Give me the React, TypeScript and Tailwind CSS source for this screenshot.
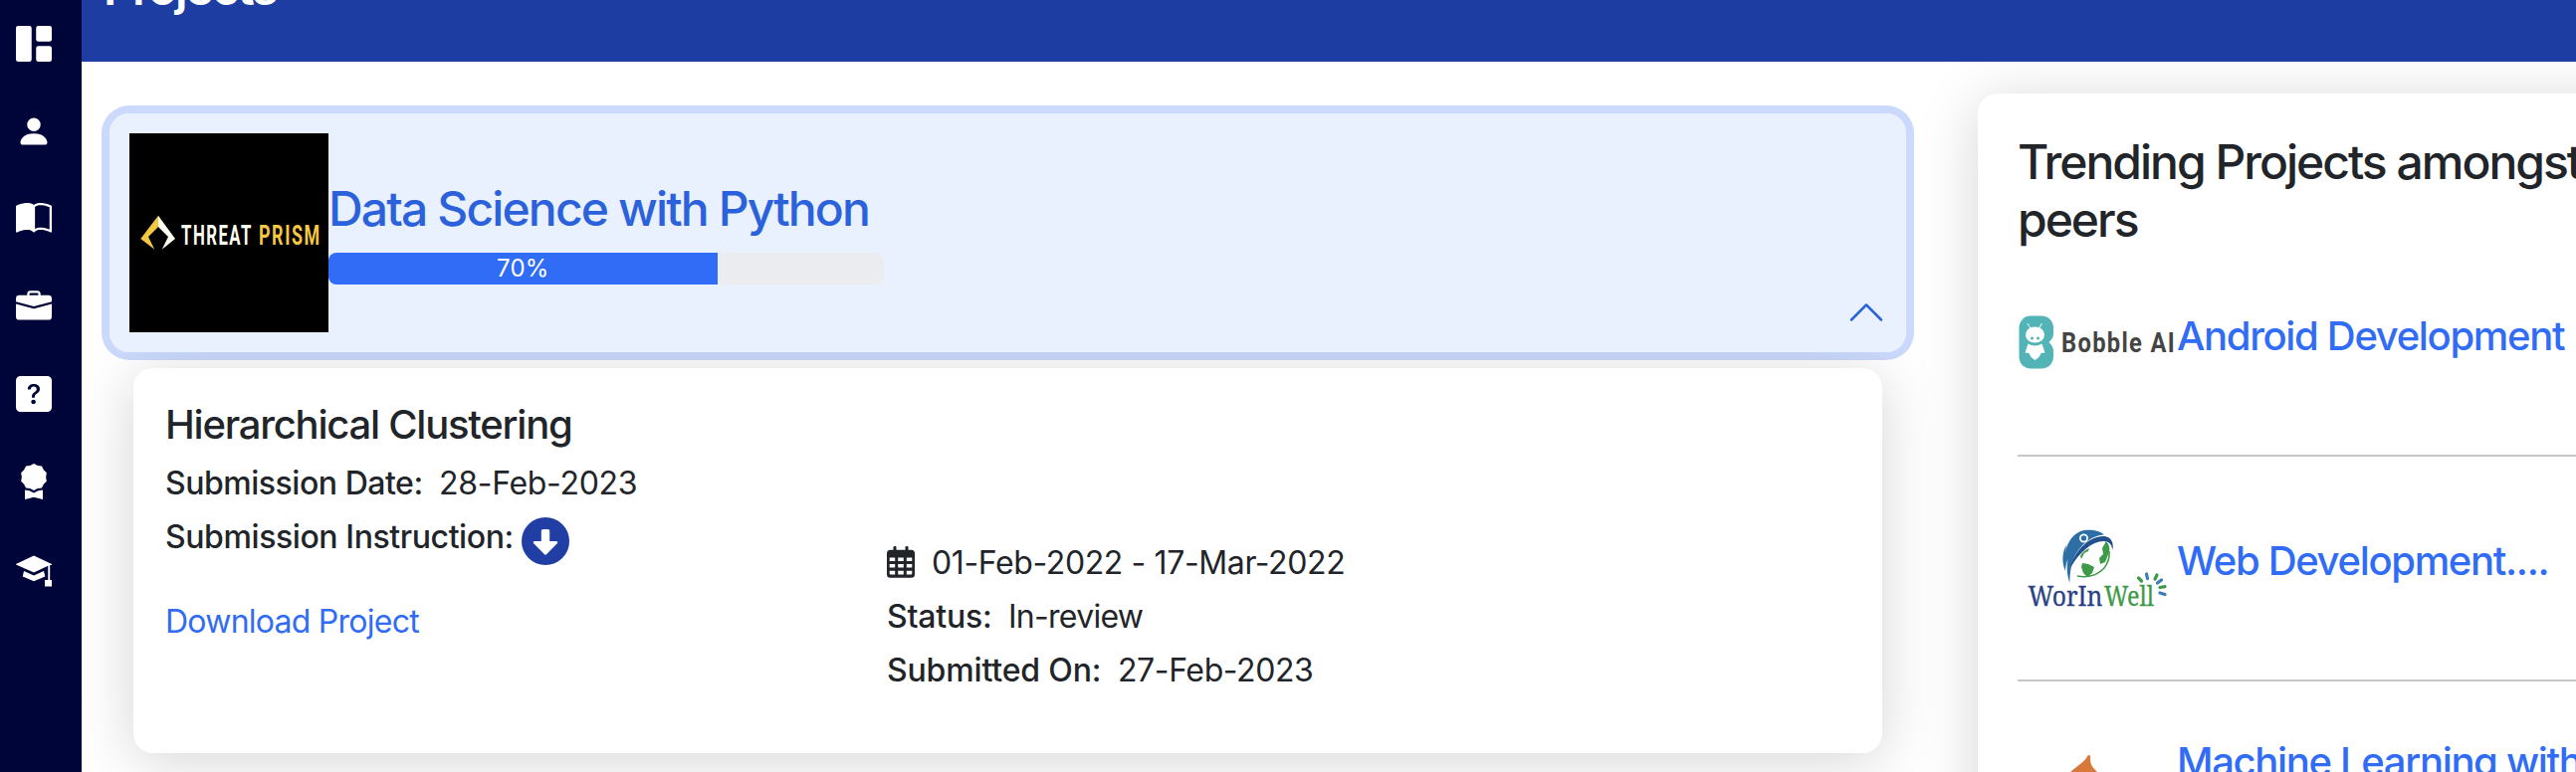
import type { ReactNode } from "react";
import {
  BsAwardFill,
  BsBookHalf,
  BsBriefcaseFill,
  BsFillGrid1X2Fill,
  BsPersonFill,
  BsQuestionSquareFill,
} from "react-icons/bs";

function GraduationIcon() {
  return (
    <svg viewBox="0 0 36 36" className="h-9 w-9" fill="currentColor">
      <path d="M18 4.4 36 13v.9h-1.8V29H36v6.5h-7V29h3.3V14.8L18 21.4 0 13.6V13z" />
      <path d="m8 20 10 4.6L28 20l1.3 5.6L18 30.2 6.8 25.6z" />
    </svg>
  );
}

function CalendarIcon() {
  return (
    <svg viewBox="0 0 28 32" className="mb-[2px] h-8 w-7" fill="currentColor">
      <rect x="6.500" y="0" width="3" height="6" rx="1.300" />
      <rect x="18.500" y="0" width="3" height="6" rx="1.300" />
      <path
        fillRule="evenodd"
        d="M3.500 3.700h21A3.500 3.500 0 0 1 28 7.200v21a3.500 3.500 0 0 1-3.500 3.500h-21A3.500 3.500 0 0 1 0 28.200v-21a3.500 3.500 0 0 1 3.500-3.500zM2.700 11.500V15h5.500v-3.500zm8.500 0V15h5.600v-3.500zm8.600 0V15h5.500v-3.500zM2.700 18v3.500h5.500V18zm8.500 0v3.500h5.600V18zm8.600 0v3.500h5.500V18zM2.700 24.800v2.700q0 1 1 1h4.500v-3.700zm8.500 0v3.700h5.600v-3.700zm8.600 0v3.700h4.500q1 0 1-1v-2.700z"
      />
    </svg>
  );
}

const navIcons: ReactNode[] = [
  <BsFillGrid1X2Fill size={36} />,
  <BsPersonFill size={36} />,
  <BsBookHalf size={36} />,
  <BsBriefcaseFill size={36} />,
  <BsQuestionSquareFill size={36} />,
  <BsAwardFill size={36} />,
  <GraduationIcon />,
];

function Sidebar() {
  return (
    <nav className="flex w-[82px] shrink-0 flex-col gap-[52px] bg-[#000539] pt-[26px] pl-4 text-white">
      {navIcons.map((icon, i) => (
        <span key={i} className="h-9 w-9">
          {icon}
        </span>
      ))}
    </nav>
  );
}

function ThreatPrismLogo() {
  return (
    <svg viewBox="0 0 200 200" className="h-[200px] w-[200px] shrink-0 bg-black">
      <path d="M29 82.7 11.3 106l14 10.7L19 104l10-10z" fill="#f5c842" />
      <path d="M29 82.7 46 106l-13.3 10.7L39 104 29 94z" fill="#fffef0" />
      <g fontFamily="Roboto, sans-serif" fontWeight="700" fontSize="28" letterSpacing="2.500">
        <text transform="translate(52 112) scale(.61 1)" textLength="118" lengthAdjust="spacingAndGlyphs" fill="#fffef0">
          THREAT
        </text>
        <text transform="translate(130 112) scale(.61 1)" textLength="103" lengthAdjust="spacingAndGlyphs" fill="#f5c842">
          PRISM
        </text>
      </g>
    </svg>
  );
}

function BobbleLogo() {
  return (
    <svg viewBox="0 0 160 160" className="h-[160px] w-[160px] shrink-0">
      <path
        d="M13 53.500h11c7 0 12 5 12 12v6c0 4-2 6-4.500 8.500C34 82.500 36 85 36 89v5c0 7-5 12.500-12 12.500H13c-7 0-11.500-5.500-11.500-12.500V66c0-7 4.500-12.500 11.500-12.500z"
        fill="#52b4b6"
      />
      <path d="m10 61 3 5M24.500 61l-3 5" stroke="#fff" strokeWidth="1" fill="none" />
      <ellipse cx="17.500" cy="72.500" rx="9.500" ry="8" fill="#fff" />
      <path d="M10.500 81.500q7 4 14 0l3 9-4 .5q-1 4-6 7-5-3-6-7l-4-.5z" fill="#fff" />
      <circle cx="14.500" cy="76" r="1.500" fill="#52b4b6" />
      <circle cx="20.500" cy="76" r="1.500" fill="#52b4b6" />
      <text
        x="44"
        y="89.500"
        textLength="115"
        lengthAdjust="spacingAndGlyphs"
        fontFamily="Roboto, sans-serif"
        fontWeight="700"
        fontSize="27"
        letterSpacing="1.500"
        fill="#444"
      >
        Bobble AI
      </text>
    </svg>
  );
}

function WorInWellLogo() {
  return (
    <svg viewBox="0 0 160 160" className="h-[160px] w-[160px] shrink-0">
      <path
        d="M52.300 96C49.500 88 49 80 50.500 72 49 76 48 80 48 84c-4-9-3-20 1-26l-1 7c2-10 8-20 19-22 9-1 16 1 20 4.500-14 1-26 12-31 25-3 8-3.500 16-3.700 23.500z"
        fill="#2c6ea6"
      />
      <path
        d="M53 80c5-17 19-31 33-31 7 0 11 5 9.500 14-1-6-4-9-9-9-12 0-24 11-33 26z"
        fill="#23508c"
      />
      <circle cx="66.500" cy="51" r="3.600" fill="#2c6ea6" stroke="#fff" strokeWidth="1.800" />
      <path d="M63 69c2-4 5-6 9-8l-1 3-4 2-3 6z" fill="#3f9a47" />
      <path d="M89 54l-4 7 1 6-4 4 1 6 5-2 4-10c1-4 0-8-3-11z" fill="#3f9a47" />
      <path d="M65 76l6 1 6 3-2 6-5 4-4-4-2-6z" fill="#3f9a47" />
      <path d="M60 89q17 3 27-8 6-8 5-17" stroke="#3f9a47" strokeWidth="1.500" fill="none" />
      <g fontFamily="'Noto Serif', 'Liberation Serif', serif" fontSize="27">
        <text x="10.500" y="119" textLength="75" lengthAdjust="spacingAndGlyphs" fill="#2a3f86" stroke="#2a3f86" strokeWidth=".3">
          WorIn
        </text>
        <text x="87" y="119" textLength="50" lengthAdjust="spacingAndGlyphs" fill="#3f9a47" stroke="#3f9a47" strokeWidth=".3">
          Well
        </text>
      </g>
      <g strokeWidth="3.200" strokeLinecap="round">
        <path d="m121.500 91 3 3M138 92l2-4M143 100.500l5-.8" stroke="#3f9a47" />
        <path d="m129.500 87 1 4.500M140.500 96l4-3M143 106l5 1.500" stroke="#3a7db5" />
      </g>
    </svg>
  );
}

function FlameLogo() {
  return (
    <svg viewBox="0 0 160 160" className="h-[160px] w-[160px] shrink-0">
      <path d="M48 67c5-10 18-15 22-22.500 1.500-2.500 3.500-1.500 3.200 1.500-.4 5 .8 8 4.800 12 10 9 12 30-2 40-10 7-24 4-29-6-4-9-3-18 1-25z" fill="#d9783b" />
    </svg>
  );
}

function ProjectBanner() {
  return (
    <div className="rounded-[20px] shadow-[0_0_0_8px_#cbd9fc]">
      <div className="relative z-10 flex h-[240px] w-[1805px] items-center rounded-[20px] bg-[#e9f0fe] pr-5 pl-5">
        <ThreatPrismLogo />
        <div className="-mt-[2px] flex flex-1 flex-col gap-[15px]">
          <h2 className="text-[48px] leading-[58px] font-[550] tracking-[-1.850px] text-[#2b62dc]">
            Data Science with Python
          </h2>
          <div className="h-8 w-[558px] overflow-hidden rounded-[8px] bg-[#ebecef]">
            <div className="flex h-full w-[70%] items-center justify-center bg-[#306cf5] text-2xl tracking-[0.300px] text-white">
              70%
            </div>
          </div>
        </div>
        <svg viewBox="0 0 16 16" className="mb-5 h-10 w-10 self-end" fill="#2b62dc">
          <path d="M14.354 11.354a.5.5 0 0 1-.708 0L8 5.707l-5.646 5.647a.5.5 0 0 1-.708-.708l6-6a.5.5 0 0 1 .708 0l6 6a.5.5 0 0 1 0 .708z" />
        </svg>
      </div>
    </div>
  );
}

function DownloadBadge() {
  return (
    <svg viewBox="0 0 48 48" className="h-12 w-12">
      <circle cx="24" cy="24" r="24" fill="#203ea3" />
      <path
        d="M21.500 12h5a1.700 1.700 0 0 1 1.700 1.700V24h6.600c1.500 0 2 1.200 1 2.300L25.200 37.100c-.7.800-1.700.8-2.400 0L12.200 26.300c-1-1.100-.5-2.300 1-2.300h6.600V13.700A1.700 1.700 0 0 1 21.500 12z"
        fill="#fff"
      />
    </svg>
  );
}

function ProjectDetail() {
  return (
    <div className="mt-4 ml-6 flex h-[387px] w-[1757px] rounded-[20px] bg-white pl-8 text-[32px] shadow-[0_8px_60px_rgba(0,0,0,0.170)]">
      <div className="w-[725px] pt-[33px]">
        <h3 className="mb-2 text-[40px] leading-[48px] font-[550] tracking-[-1.230px]">
          Hierarchical Clustering
        </h3>
        <p className="flex h-[54px] items-center leading-[54px]">
          <span className="w-[275px] font-[550] tracking-[-0.470px]">Submission Date:</span>
          <span className="tracking-[-0.300px]">28-Feb-2023</span>
        </p>
        <div className="flex h-[54px] items-center leading-[54px]">
          <span className="w-[358px] font-[550] tracking-[-0.410px]">Submission Instruction:</span>
          <span className="mt-[8px]">
            <DownloadBadge />
          </span>
        </div>
        <a className="mt-[31px] block leading-[54px] tracking-[-0.750px] text-[#306cf5]">
          Download Project
        </a>
      </div>
      <div className="pt-[169px]">
        <p className="flex h-[54px] items-center leading-[54px]">
          <CalendarIcon />
          <span className="ml-[17px] tracking-[-0.380px]">01-Feb-2022 - 17-Mar-2022</span>
        </p>
        <p className="flex h-[54px] items-center leading-[54px]">
          <span className="w-[122px] font-[550] tracking-[-0.200px]">Status:</span>
          <span className="tracking-[-0.720px]">In-review</span>
        </p>
        <p className="flex h-[54px] items-center leading-[54px]">
          <span className="w-[232px] font-[550] tracking-[-0.160px]">Submitted On:</span>
          <span className="tracking-[-0.400px]">27-Feb-2023</span>
        </p>
      </div>
    </div>
  );
}

function TrendingRow({ logo, className, children }: { logo: ReactNode; className: string; children: ReactNode }) {
  return (
    <div className={`flex items-center border-b-2 border-[#c8c8c8] pb-[33px] ${className}`}>
      {logo}
      <div className="-mt-[13px] text-[40px] leading-[48px] font-[550] tracking-[-1.330px] whitespace-nowrap text-[#306cf5]">
        {children}
      </div>
    </div>
  );
}

function TrendingPanel() {
  return (
    <aside className="mt-8 ml-[72px] h-[1000px] w-[720px] shrink-0 rounded-[20px] bg-white px-10 pt-10 shadow-[0_8px_60px_rgba(0,0,0,0.170)]">
      <h2 className="text-[48px] leading-[57.600px] font-[550] tracking-[-2px]">
        Trending Projects amongst
        <br />
        peers
      </h2>
      <TrendingRow logo={<BobbleLogo />} className="pt-[15px]">
        Android Development
      </TrendingRow>
      <TrendingRow logo={<WorInWellLogo />} className="pt-[31px]">
        Web Development....
      </TrendingRow>
      <TrendingRow logo={<FlameLogo />} className="pt-[31px]">
        Machine Learning with
        <br />
        Python
      </TrendingRow>
    </aside>
  );
}

export default function App() {
  return (
    <div className="flex h-[776px] w-full overflow-hidden bg-white font-[Inter,sans-serif] text-[#212529]">
      <Sidebar />
      <main className="flex min-w-0 flex-1 flex-col overflow-hidden">
        <header className="h-[62px] shrink-0 overflow-hidden bg-[#1e3da2] pl-[22px]">
          <h1 className="-mt-[41px] text-[48px] leading-[57.600px] font-semibold tracking-[-2.050px] text-white">
            Projects
          </h1>
        </header>
        <div className="flex min-h-0 flex-1 items-start overflow-hidden pl-7">
          <section className="shrink-0 pt-[52px]">
            <ProjectBanner />
            <ProjectDetail />
          </section>
          <TrendingPanel />
        </div>
      </main>
    </div>
  );
}
